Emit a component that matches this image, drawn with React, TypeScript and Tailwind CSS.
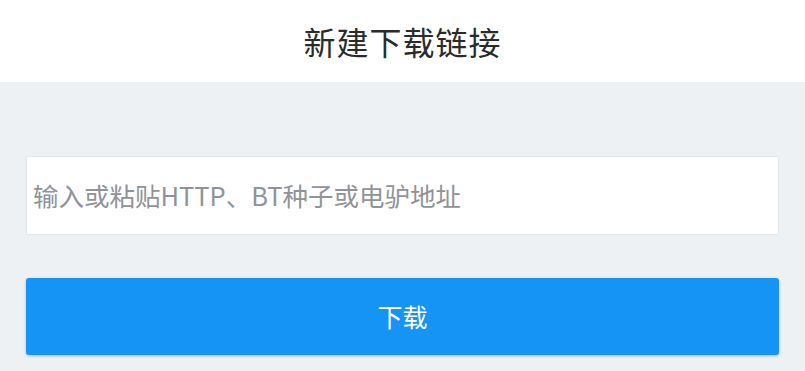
export default function App() {
  const cjk = { fontFamily: '"Noto Sans CJK SC", "Noto Sans", sans-serif' };
  return (
    <div className="w-[805px] h-[371px] bg-[#eef1f4] flex flex-col overflow-hidden" style={cjk}>
      {/* Header */}
      <div className="h-[82px] bg-white flex items-center justify-center">
        <h1 className="text-[32px] leading-none text-[#2b2b2b] tracking-[1px] font-normal">新建下载链接</h1>
      </div>

      <div className="px-[26px] pt-[74px] flex flex-col">
        {/* Input */}
        <div className="h-[79px] bg-white border border-[#e4e7ea] rounded-[2px] flex items-center px-[6px]">
          <input
            className="w-full outline-none bg-transparent text-[25.5px] text-[#333] placeholder:text-[#909398]"
            placeholder="输入或粘贴HTTP、BT种子或电驴地址"
            style={cjk}
          />
        </div>

        {/* Button */}
        <button
          className="mt-[43px] h-[77px] w-full bg-[#1594f6] rounded-[3px] shadow-[0_1px_3px_rgba(0,0,0,0.25)] text-white text-[25px] flex items-center justify-center"
          style={cjk}
        >
          下载
        </button>
      </div>
    </div>
  );
}
